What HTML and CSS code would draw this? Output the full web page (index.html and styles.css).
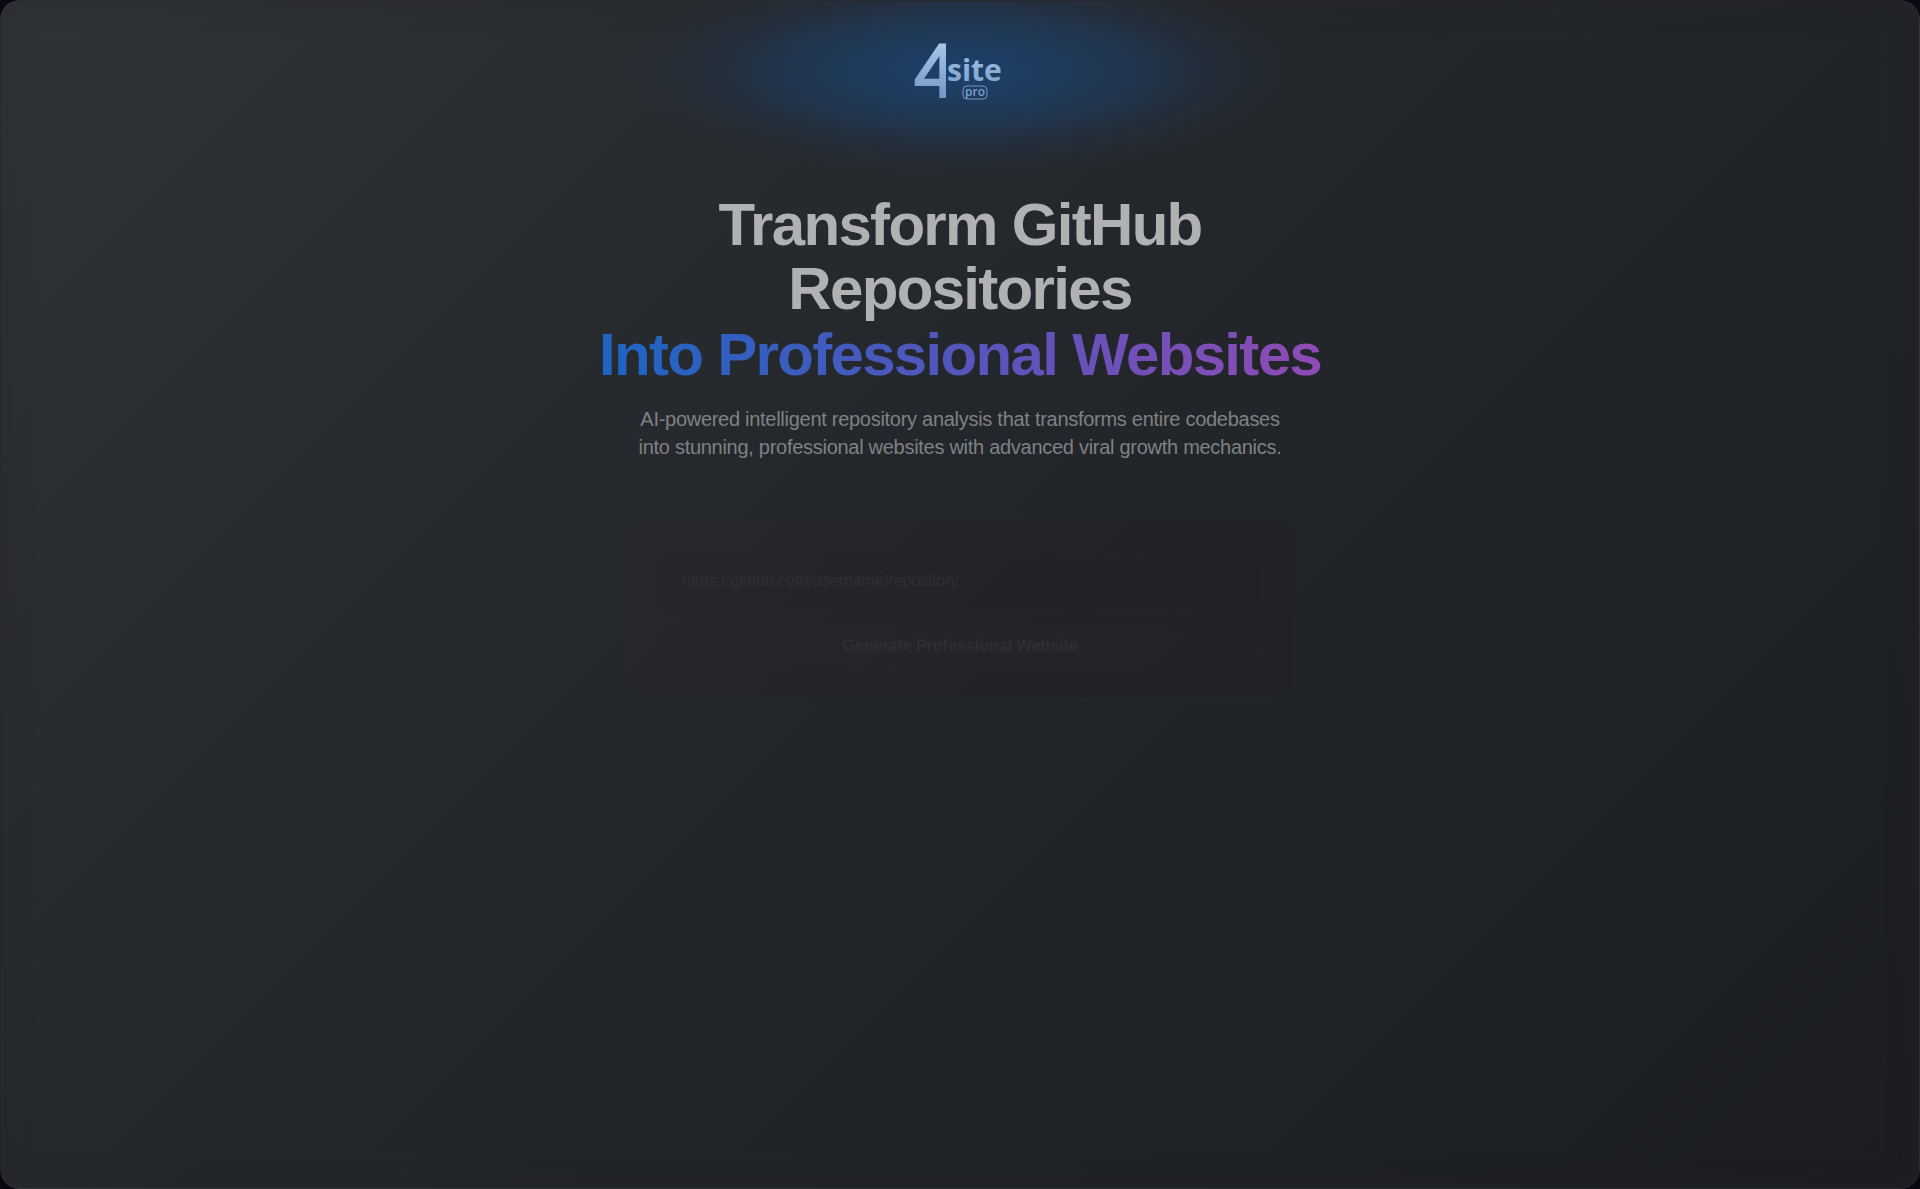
FILE: index.html
```html
<!DOCTYPE html>
<html lang="en">
<head>
  <meta charset="utf-8">
  <meta name="viewport" content="width=device-width, initial-scale=1">
  <title>4site.pro</title>
  <link rel="stylesheet" href="styles.css">
</head>
<body>
  <main class="panel">
    <header class="brand">
      <svg class="logo" width="96" height="64" viewBox="0 0 96 64" role="img" aria-label="4site pro">
        <defs>
          <linearGradient id="ink" gradientUnits="userSpaceOnUse" x1="0" y1="4" x2="0" y2="60">
            <stop offset="0" stop-color="#a6c6ea"/>
            <stop offset="1" stop-color="#7397c2"/>
          </linearGradient>
          <clipPath id="stem-edge">
            <rect x="0" y="0" width="34" height="64"/>
          </clipPath>
        </defs>
        <g clip-path="url(#stem-edge)">
          <text class="logo-four" x="2" y="58">4</text>
        </g>
        <text class="logo-site" x="35" y="42">site</text>
        <rect class="logo-badge" x="51" y="47" width="24" height="13" rx="4"/>
        <text class="logo-pro" x="63" y="57">pro</text>
      </svg>
    </header>

    <section class="hero">
      <h1 class="title">Transform GitHub Repositories
        <span class="title-accent">Into Professional Websites</span></h1>
      <p class="lead">AI-powered intelligent repository analysis that transforms entire codebases into stunning, professional websites with advanced viral growth mechanics.</p>
    </section>

    <form class="card">
      <input class="field" type="url" aria-label="Repository URL" placeholder="https://github.com/username/repository">
      <button class="submit" type="button">Generate Professional Website</button>
    </form>
  </main>
</body>
</html>
```

FILE: styles.css
```css
* {
  box-sizing: border-box;
}

body {
  margin: 0;
  background: #080910;
  font-family: "Liberation Sans", Arial, sans-serif;
}

.panel {
  display: flex;
  flex-direction: column;
  align-items: center;
  min-height: 100vh;
  overflow: hidden;
  border: 1px solid rgba(255, 255, 255, 0.03);
  border-radius: 20px;
  background: linear-gradient(135deg, #2f3337 0%, #23272b 45%, #1b1d22 100%);
  box-shadow: inset 0 0 30px rgba(42, 36, 40, 0.4);
}

.brand {
  display: flex;
  justify-content: center;
  width: 100%;
  max-width: 672px;
  height: 176px;
  padding-top: 38px;
  background: radial-gradient(ellipse 336px 105px at 50% 70px, #1c416a 0%, #1e3c5f 25%, #21354d 52%, rgba(35, 46, 60, 0.85) 73%, rgba(36, 38, 44, 0) 100%);
}

.logo-four {
  font: 400 76px "Liberation Sans", Arial, sans-serif;
  fill: url(#ink);
  stroke: url(#ink);
  stroke-width: 2;
}

.logo-site {
  font: 700 30px "Open Sans", "Noto Sans", sans-serif;
  fill: url(#ink);
}

.logo-badge {
  fill: none;
  stroke: #7396c2;
}

.logo-pro {
  font: 600 12px "Open Sans", "Noto Sans", sans-serif;
  text-anchor: middle;
  fill: #7a9fcc;
}

.hero {
  display: flex;
  flex-direction: column;
  align-items: center;
  gap: 16px;
  padding-top: 16px;
  text-align: center;
}

.title {
  max-width: 768px;
  margin: 0;
  font-size: 60px;
  line-height: 64px;
  letter-spacing: -0.028em;
  color: #b0b1b3;
}

.title-accent {
  display: block;
  line-height: 68px;
  background: linear-gradient(90deg, #1a66c2, #5a54bb 55%, #944ab4);
  background-clip: text;
  color: transparent;
}

.lead {
  max-width: 672px;
  margin: 0;
  font-size: 20px;
  line-height: 28px;
  letter-spacing: -0.014em;
  color: #7f8184;
}

.card {
  display: flex;
  flex-direction: column;
  gap: 16px;
  width: 100%;
  max-width: 672px;
  margin-top: 58px;
  padding: 32px;
  border: 1px solid rgba(38, 39, 43, 0.2);
  border-radius: 20px;
  background: linear-gradient(135deg, #28292c, #242529 40%, #202125);
  background-clip: padding-box;
}

.field,
.submit {
  width: 100%;
  border-radius: 12px;
  font-family: inherit;
  font-size: 16px;
}

.field {
  height: 57px;
  padding: 0 24px;
  border: 1px solid #242529;
  background: linear-gradient(135deg, #26272b, #232428 50%, #202125);
  color: #2f3035;
}

.field::placeholder {
  color: #2f3035;
  opacity: 1;
}

.submit {
  height: 41px;
  padding: 0;
  border: 0;
  background: linear-gradient(135deg, #26272a, #222327);
  font-weight: 700;
  color: #2e2f34;
}
```
